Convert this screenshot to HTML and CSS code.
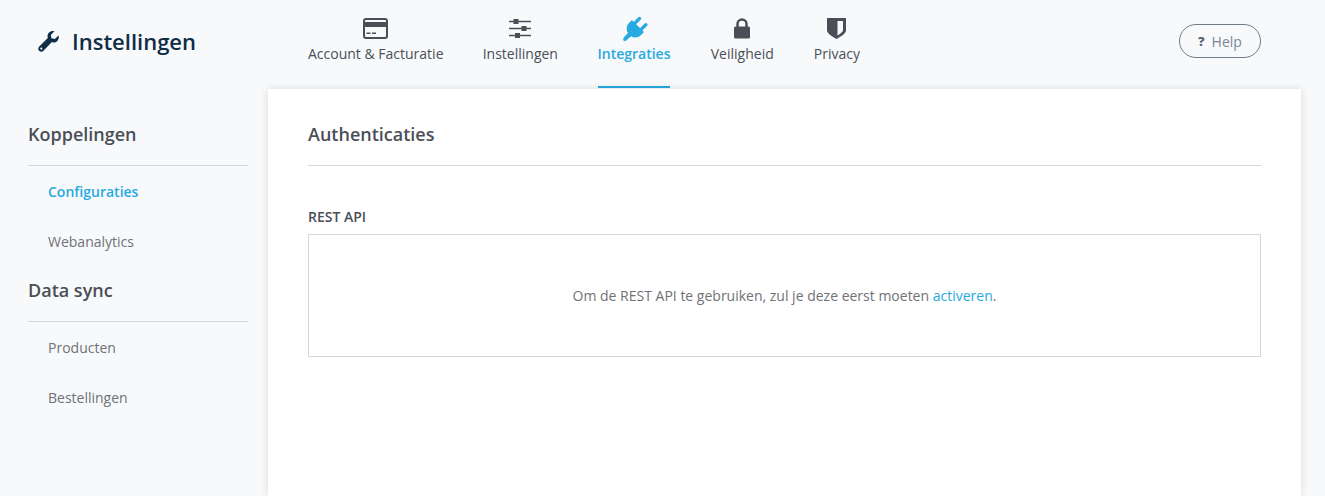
FILE: index.html
```html
<!DOCTYPE html>
<html lang="nl">
<head>
<meta charset="utf-8">
<title>Instellingen</title>
<link rel="stylesheet" href="styles.css">
</head>
<body>
<header class="topbar">
  <div class="brand">
    <svg class="brand-icon" viewBox="0 0 21 21"><path d="M20.6 4.600c.5 1.700.1 3.900-1.300 5.300-1.500 1.500-3.600 1.900-5.400 1.200L5.200 19.900c-1 1-2.800 1-3.900 0l-.3-.3c-1-1.100-1-2.800 0-3.900l8.800-8.700C9.200 5.200 9.600 3 11.100 1.600 12.500.2 14.600-.3 16.400.3l-3.600 3.600.6 3.400 3.400.6z M3.300 16.500a1.100 1.100 0 1 0 0 2.200 1.100 1.100 0 0 0 0-2.200z" fill-rule="evenodd"/></svg>
    <h1 class="brand-title">Instellingen</h1>
  </div>
  <nav class="tabs">
    <a class="tab tab-first">
      <svg class="tab-icon" width="25" height="21" viewBox="0 0 25 21"><rect x="1" y="1" width="23" height="19" rx="2" fill="none" stroke="currentColor" stroke-width="2"/><rect x="1" y="4" width="23" height="5" fill="currentColor"/><rect x="3.500" y="14.500" width="4" height="1.500" fill="currentColor"/><rect x="9" y="14.500" width="4" height="1.500" fill="currentColor"/></svg>
      <span>Account &amp; Facturatie</span>
    </a>
    <a class="tab">
      <svg class="tab-icon" width="22" height="21" viewBox="0 0 22 21"><path d="M0 3.500h22M0 10.500h22M0 17.500h22" stroke="currentColor" stroke-width="1.500" fill="none"/><rect x="4.500" y="1" width="5" height="5" fill="currentColor"/><rect x="12.500" y="8" width="5" height="5" fill="currentColor"/><rect x="6" y="15" width="5" height="5" fill="currentColor"/></svg>
      <span>Instellingen</span>
    </a>
    <a class="tab tab-active">
      <svg class="tab-icon plug-icon" width="25" height="25" viewBox="0 0 25 25"><path d="M16.500 2.500 12.400 6.600" stroke="currentColor" stroke-width="3.400" stroke-linecap="round"/><path d="M22.800 8.800 18.700 12.900" stroke="currentColor" stroke-width="3.400" stroke-linecap="round"/><path d="M8.900 4 21 16.100 17.800 19.300C15 22 11 22.200 8 20.200L3 24.800 1 24.900.2 24 .4 22 5 17C3 14 3.300 9.600 6 6.900z" fill="currentColor"/></svg>
      <span>Integraties</span>
    </a>
    <a class="tab">
      <svg class="tab-icon" width="16" height="21" viewBox="0 0 16 21"><path d="M3.500 9V6a4.500 4.500 0 0 1 9 0v3" fill="none" stroke="currentColor" stroke-width="2.500"/><rect x="0" y="8.500" width="16" height="12" rx="1.500" fill="currentColor"/></svg>
      <span>Veiligheid</span>
    </a>
    <a class="tab">
      <svg class="tab-icon" width="19" height="21" viewBox="0 0 19 21"><path d="M0 0H19V12.500C19 15.500 13 19 9.500 21 6 19 0 15.500 0 12.500z" fill="currentColor"/><path d="M10.500 3H16V12C16 13.800 13 16 10.500 17.500z" fill="#f8f9fb"/></svg>
      <span>Privacy</span>
    </a>
  </nav>
  <a class="help"><b class="help-mark">?</b> Help</a>
</header>
<main class="layout">
  <aside class="sidebar">
    <h2 class="section-title">Koppelingen</h2>
    <ul class="side-list">
      <li class="side-item side-item-active">Configuraties</li>
      <li class="side-item">Webanalytics</li>
    </ul>
    <h2 class="section-title">Data sync</h2>
    <ul class="side-list">
      <li class="side-item">Producten</li>
      <li class="side-item">Bestellingen</li>
    </ul>
  </aside>
  <section class="panel">
    <h2 class="section-title">Authenticaties</h2>
    <h3 class="field-label">REST API</h3>
    <div class="notice">
      <p class="notice-text">Om de REST API te gebruiken, zul je deze eerst moeten <a class="link">activeren</a>.</p>
    </div>
  </section>
</main>
</body>
</html>
```
FILE: styles.css
```css
* { box-sizing: border-box; }
html, body { margin: 0; height: 100%; }
body {
  height: 496px;
  overflow: hidden;
  background: #f8f9fb;
  color: #4a4f57;
  font-family: "Open Sans", sans-serif;
  font-size: 14px;
}
h1, h2, h3, p, ul { margin: 0; padding: 0; }
ul { list-style: none; }

.topbar {
  display: flex;
  height: 88px;
  padding-right: 64px;
}
.brand {
  display: flex;
  align-items: center;
  gap: 13px;
  width: 308px;
  padding-left: 38px;
  height: 82px;
}
.brand-icon { width: 21px; height: 21px; fill: #0f2d47; flex: none; }
.brand-title {
  font-size: 22px;
  font-weight: 600;
  color: #0f2d47;
  line-height: 30px;
}
.tabs { display: flex; gap: 40px; }
.tab {
  display: flex;
  flex-direction: column;
  align-items: center;
  justify-content: flex-end;
  height: 88px;
  padding-bottom: 24px;
  color: #4a4f57;
  line-height: 20px;
  white-space: nowrap;
}
.tab-first { margin-right: -0.8px; }
.tab-icon { display: block; margin-bottom: 5px; }
.tab-active {
  width: 72px;
  margin-right: 0.8px;
  color: #27aae1;
  font-weight: 600;
  border-bottom: 2px solid #27aae1;
  padding-bottom: 22px;
}
.tab-active .tab-icon { margin-bottom: 3px; }
.tab-active .plug-icon { margin-left: 4px; }
.help {
  margin: 24px 0 0 auto;
  width: 82px;
  height: 34px;
  display: flex;
  align-items: center;
  gap: 7px;
  padding-left: 18px;
  border: 1px solid #6f7b87;
  border-radius: 17px;
  color: #7a8794;
}
.help-mark { font-weight: 800; font-size: 13px; color: #5b6875; }

.layout {
  display: flex;
  gap: 20px;
  margin-left: 28px;
  width: 1273px;
  height: 408px;
}
.sidebar {
  width: 220px;
  flex: none;
  border-top: 1px solid #f5f6f8;
}
.section-title {
  font-size: 18px;
  font-weight: 600;
  line-height: 24px;
  padding: 33px 0 19px;
  border-bottom: 1px solid #d5d6d9;
  color: #4a4f57;
}
.side-list { padding: 1px 0 0 20px; }
.sidebar .side-list + .section-title { padding-top: 11px; }
.side-item {
  height: 50px;
  line-height: 50px;
  color: #6f7276;
}
.side-item-active { color: #27aae1; font-weight: 600; }
.panel {
  flex: none;
  width: 1033px;
  margin-top: 1px;
  padding: 0 40px;
  background: #fff;
  box-shadow: 0 0 8px rgba(0, 0, 0, .12);
}
.field-label {
  font-size: 14px;
  font-weight: 600;
  line-height: 20px;
  margin-top: 41px;
  margin-bottom: 7px;
  color: #4a4f57;
}
.notice {
  height: 123px;
  border: 1px solid #d5d6d9;
  display: flex;
  align-items: center;
  justify-content: center;
}
.notice-text { color: #6f7276; }
.link { color: #27aae1; }
```
